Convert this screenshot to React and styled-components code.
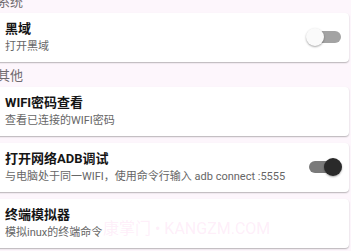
import React from 'react'
import styled, { createGlobalStyle } from 'styled-components'

const GlobalStyle = createGlobalStyle`
  html, body {
    margin: 0;
    padding: 0;
    background: #fdf6fc;
    overflow: hidden;
  }
  body {
    font-family: Roboto, "Noto Sans CJK SC", sans-serif;
  }
`;

const Page = styled.div`
  position: relative;
  width: 351px;
  height: 251px;
  overflow: hidden;
  background: #fdf6fc;
`;

const List = styled.div`
  display: flex;
  flex-direction: column;
  margin: -12px 2px 0 -6px;
`;

const Header = styled.div`
  height: 25px;
  display: flex;
  align-items: center;
  padding-left: 3px;
  font-size: 13px;
  color: #6f6a6f;
`;

const Card = styled.div`
  display: flex;
  align-items: center;
  background: #fff;
  border-radius: 4px;
  box-shadow: 0 1px 1.5px rgba(0, 0, 0, 0.28);
  padding: 6px 7px 7px 11px;
  margin-bottom: ${p => (p.gap ? '7px' : '0')};
`;

const Text = styled.div`
  flex: 1;
  display: flex;
  flex-direction: column;
  min-width: 0;
`;

const Title = styled.div`
  font-size: 13px;
  font-weight: 700;
  line-height: 20px;
  color: #151515;
  white-space: nowrap;
`;

const Sub = styled.div`
  font-size: 11px;
  line-height: 16px;
  color: #666;
  white-space: nowrap;
`;

const Switch = styled.div`
  position: relative;
  width: 36px;
  height: 18px;
  flex-shrink: 0;
`;

const Track = styled.div`
  position: absolute;
  left: 3px;
  right: 1px;
  top: 3px;
  height: 12px;
  border-radius: 6px;
  background: ${p => (p.on ? '#7a7a7a' : '#a3a3a3')};
`;

const Thumb = styled.div`
  position: absolute;
  top: 0;
  left: ${p => (p.on ? '18px' : '0')};
  width: 18px;
  height: 18px;
  border-radius: 50%;
  background: ${p => (p.on ? '#2a2a2a' : '#fafafa')};
  box-shadow: 0 1px 2px rgba(0, 0, 0, 0.35);
`;

const Watermark = styled.div`
  position: absolute;
  left: 103px;
  top: 215px;
  font-size: 16px;
  color: rgba(250, 170, 225, 0.2);
  white-space: nowrap;
  pointer-events: none;
`;

const Toggle = ({ on }) => (
  <Switch>
    <Track on={on} />
    <Thumb on={on} />
  </Switch>
)

const App = () => (
  <Page>
    <GlobalStyle />
    <List>
      <Header>系统</Header>
      <Card>
        <Text>
          <Title>黑域</Title>
          <Sub>打开黑域</Sub>
        </Text>
        <Toggle />
      </Card>
      <Header>其他</Header>
      <Card gap>
        <Text>
          <Title>WIFI密码查看</Title>
          <Sub>查看已连接的WIFI密码</Sub>
        </Text>
      </Card>
      <Card gap>
        <Text>
          <Title>打开网络ADB调试</Title>
          <Sub>与电脑处于同一WIFI，使用命令行输入 adb connect :5555</Sub>
        </Text>
        <Toggle on />
      </Card>
      <Card gap>
        <Text>
          <Title>终端模拟器</Title>
          <Sub>模拟inux的终端命令</Sub>
        </Text>
      </Card>
    </List>
    <Watermark>康掌门 • KANGZM.COM</Watermark>
  </Page>
)

export default App;
